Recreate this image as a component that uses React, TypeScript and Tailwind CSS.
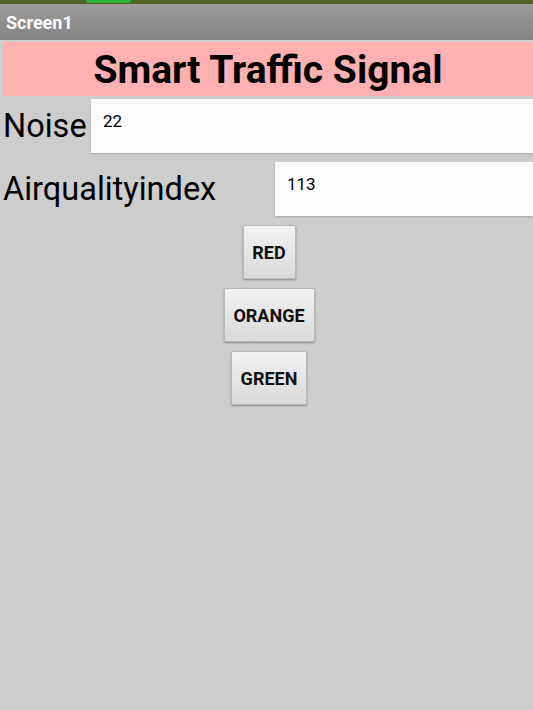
import React from "react";

function Btn({ label, w }: { label: string; w: string }) {
  return (
    <button
      className={`${w} h-[54px] rounded-[2px] border border-[#b8b8b8] bg-gradient-to-b from-[#f2f2f2] to-[#d9d9d9] text-[18px] font-bold text-[#111] shadow-[0_1px_2px_rgba(0,0,0,0.35)]`}
      style={{ fontFamily: "Roboto, sans-serif" }}
    >
      {label}
    </button>
  );
}

export default function App() {
  return (
    <div
      className="w-[533px] h-[710px] bg-[#cdcdcd] overflow-hidden flex flex-col"
      style={{ fontFamily: "Roboto, sans-serif" }}
    >
      <div className="relative h-[4px] bg-[#516522] shrink-0">
        <div className="absolute left-[86px] top-[-4px] w-[45px] h-[7px] rounded-full bg-[#2fb43a]" />
      </div>
      <div className="h-[36px] shrink-0 bg-gradient-to-b from-[#9c9c9c] to-[#838383] flex items-center pl-[6px]">
        <span className="text-white font-bold text-[18px]">Screen1</span>
      </div>
      <div className="pl-[3px] pt-[2px]">
        <div className="h-[54px] bg-[#ffb1b1] flex items-center justify-center">
          <span className="text-[39px] font-bold text-black leading-none pt-[3px]">
            Smart Traffic Signal
          </span>
        </div>
      </div>
      <div className="flex items-center mt-[3px] h-[54px]">
        <span className="w-[91px] pl-[3px] text-[32.5px] text-black leading-none">Noise</span>
        <div className="flex-1 h-[54px] bg-[#fbfbfb] shadow-[0_1px_2px_rgba(0,0,0,0.2)] pl-[12px] pt-[10px] text-[17px] text-black">
          22
        </div>
      </div>
      <div className="flex items-center mt-[9px] h-[54px]">
        <span className="w-[275px] pl-[3px] text-[32.5px] text-black leading-none">Airqualityindex</span>
        <div className="flex-1 h-[54px] bg-[#fbfbfb] shadow-[0_1px_2px_rgba(0,0,0,0.2)] pl-[12px] pt-[10px] text-[17px] text-black">
          113
        </div>
      </div>
      <div className="flex flex-col items-center gap-[9px] mt-[9px] pl-[5px]">
        <Btn label="RED" w="w-[53px]" />
        <Btn label="ORANGE" w="w-[91px]" />
        <Btn label="GREEN" w="w-[76px]" />
      </div>
    </div>
  );
}
